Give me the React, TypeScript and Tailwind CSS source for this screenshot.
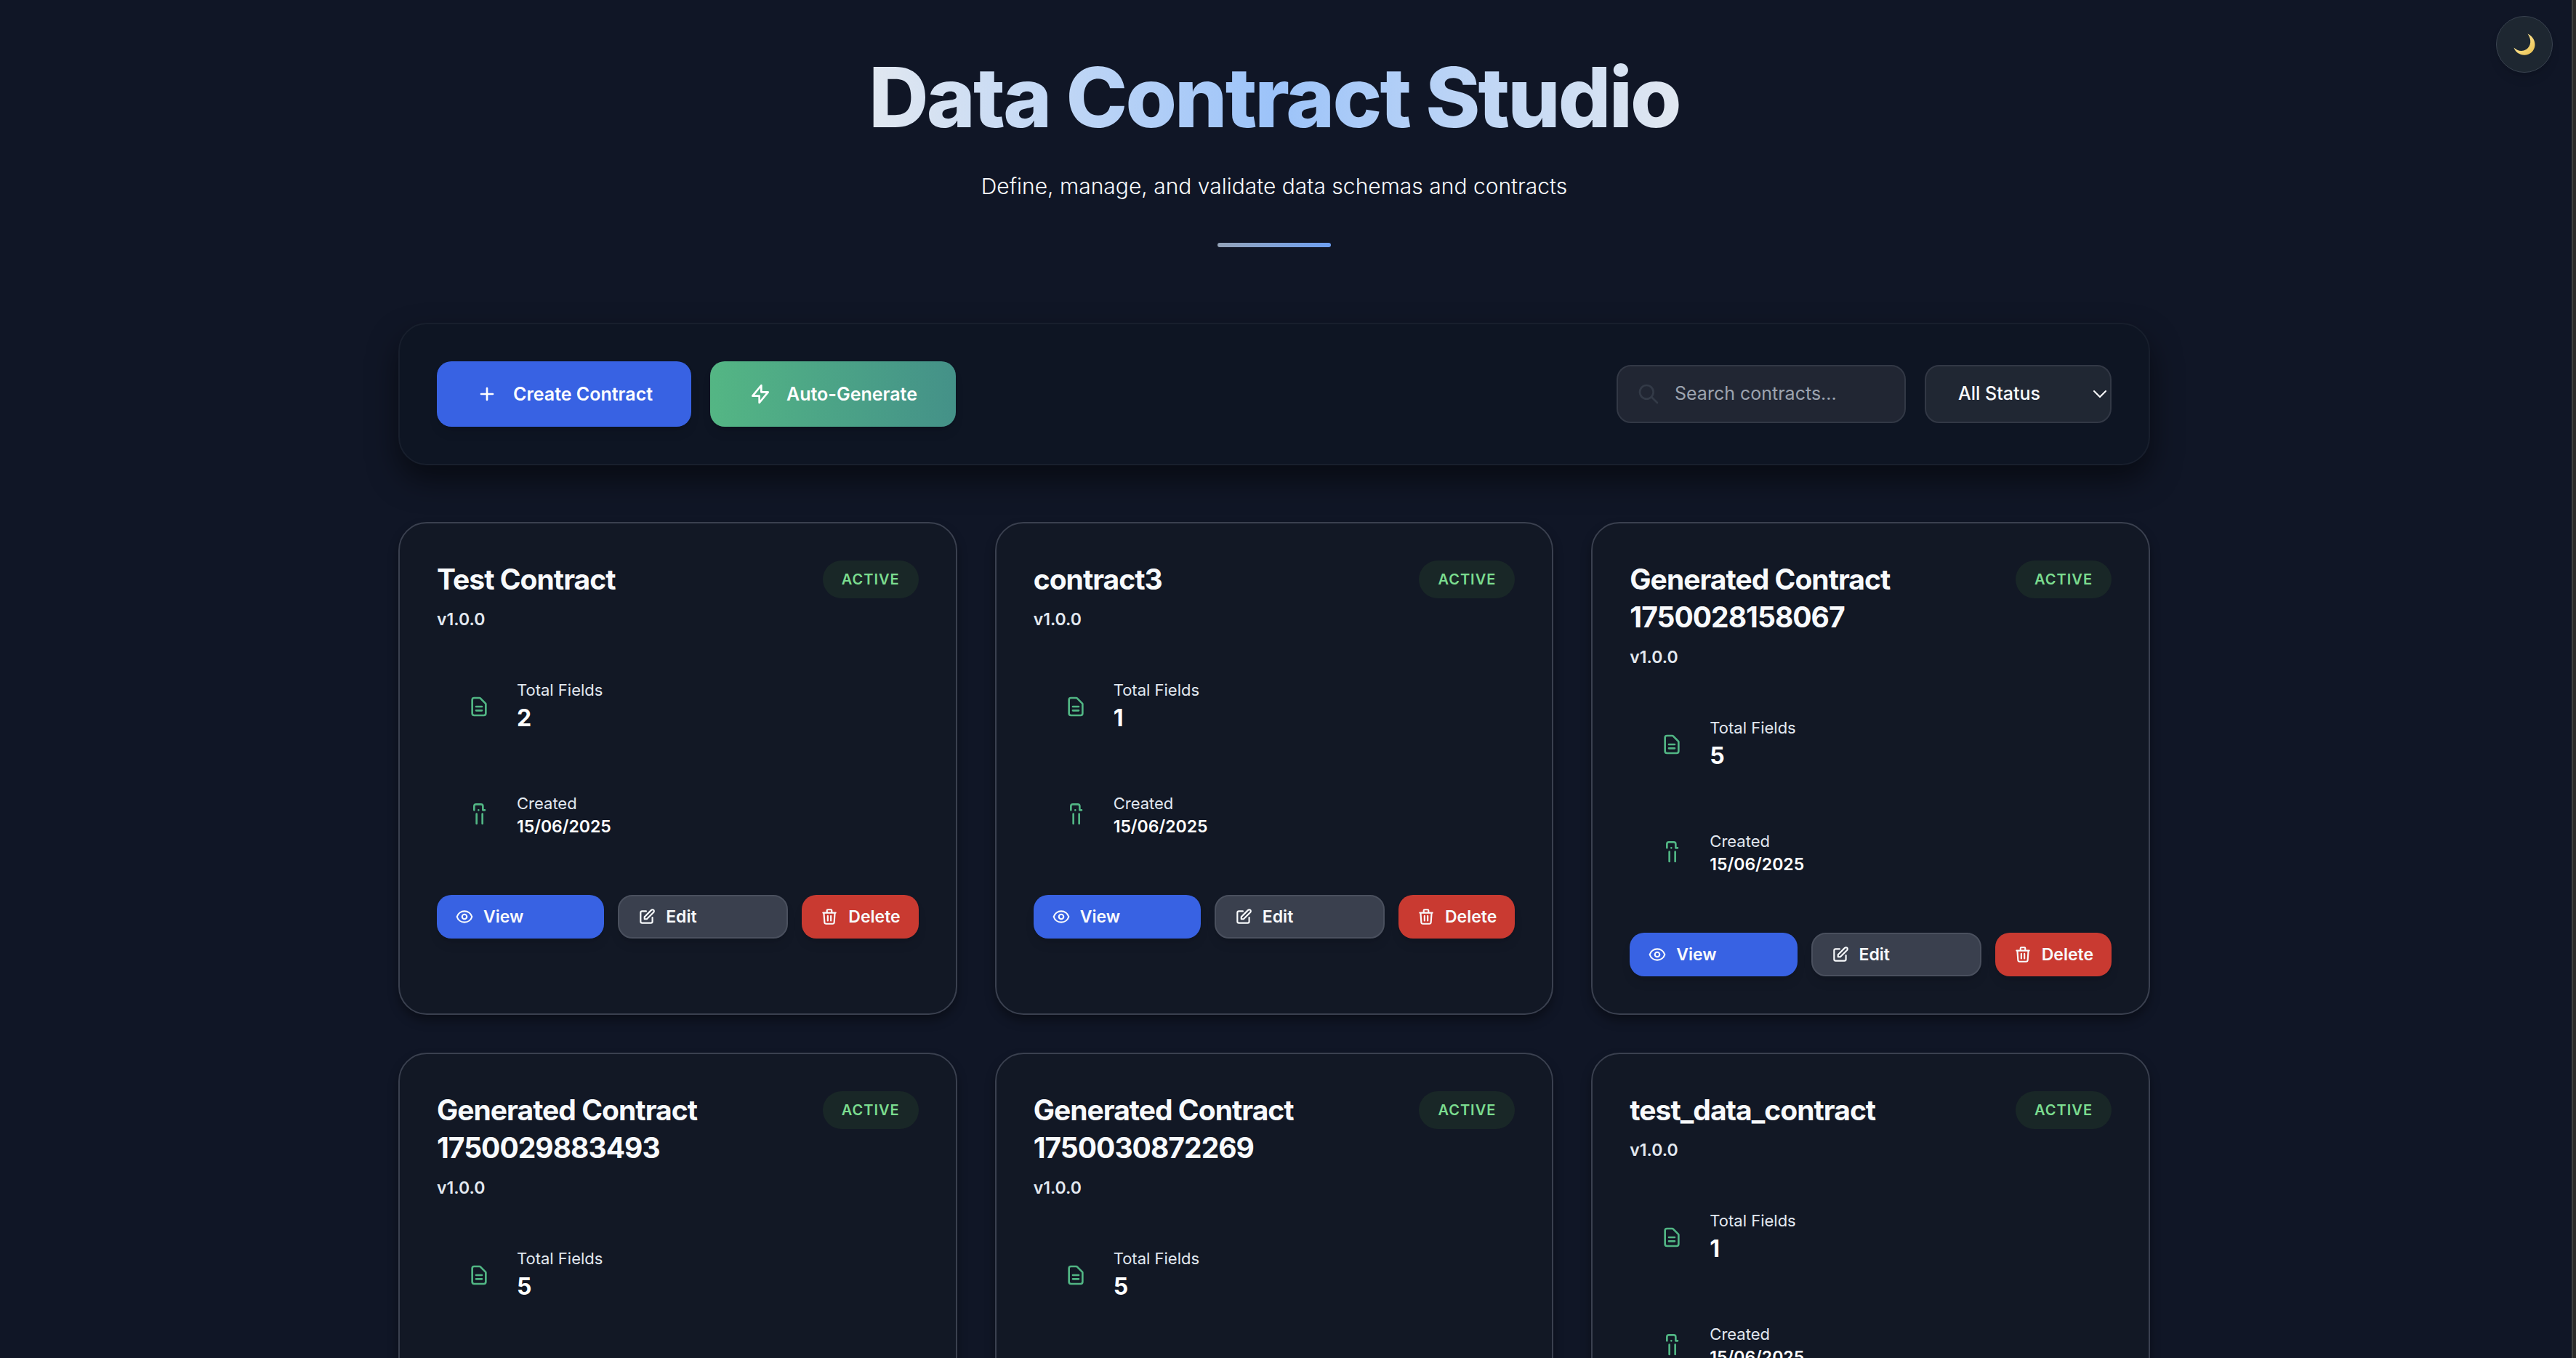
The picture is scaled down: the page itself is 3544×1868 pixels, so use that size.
import React from "react";

type Contract = { name: string; fields: number; created: string };

const contracts: Contract[] = [
  { name: "Test Contract", fields: 2, created: "15/06/2025" },
  { name: "contract3", fields: 1, created: "15/06/2025" },
  { name: "Generated Contract 1750028158067", fields: 5, created: "15/06/2025" },
  { name: "Generated Contract 1750029883493", fields: 5, created: "15/06/2025" },
  { name: "Generated Contract 1750030872269", fields: 5, created: "15/06/2025" },
  { name: "test_data_contract", fields: 1, created: "15/06/2025" },
];

function Icon({ d, className }: { d: string; className: string }) {
  return (
    <svg
      aria-hidden="true"
      viewBox="0 0 24 24"
      fill="none"
      stroke="currentColor"
      strokeWidth={2}
      strokeLinecap="round"
      strokeLinejoin="round"
      className={className}
    >
      <path d={d} />
    </svg>
  );
}

const icons = {
  plus: "M12 6v12m6-6H6",
  bolt: "M13 10V3L4 14h7v7l9-11h-7z",
  search: "M21 21l-6-6m2-5a7 7 0 11-14 0 7 7 0 0114 0z",
  document:
    "M9 12h6m-6 4h6m2 5H7a2 2 0 01-2-2V5a2 2 0 012-2h5.586a1 1 0 01.707.293l5.414 5.414a1 1 0 01.293.707V19a2 2 0 01-2 2z",
  created: "M7 7V3a2 2 0 012-2h5a2 2 0 012 2v4h2M11.500 7h.01M9.500 11v10M15.500 11v10",
  eye: "M15 12a3 3 0 11-6 0 3 3 0 016 0zM2.458 12C3.732 7.943 7.523 5 12 5c4.478 0 8.268 2.943 9.542 7-1.274 4.057-5.064 7-9.542 7-4.477 0-8.268-2.943-9.542-7z",
  edit: "M11 5H6a2 2 0 00-2 2v11a2 2 0 002 2h11a2 2 0 002-2v-5m-1.414-9.414a2 2 0 112.828 2.828L11.828 15H9v-2.828l8.586-8.586z",
  trash:
    "M19 7l-.867 12.142A2 2 0 0116.138 21H7.862a2 2 0 01-1.995-1.858L5 7m5 4v6m4-6v6m1-10V4a1 1 0 00-1-1h-4a1 1 0 00-1 1v3M4 7h16",
};

function Stat({ icon, label, children }: { icon: string; label: string; children: React.ReactNode }) {
  return (
    <div className="flex items-center gap-5 p-[26px]">
      <div className="p-4 text-[#51b584]">
        <Icon d={icon} className="size-8 overflow-visible" />
      </div>
      <div>
        <p className="text-[22px] leading-8 text-slate-200">{label}</p>
        {children}
      </div>
    </div>
  );
}

function ContractCard({ contract }: { contract: Contract }) {
  return (
    <article className="rounded-[39px] border-2 border-[#3a404f] bg-[#121825] p-[51px] shadow-[0_8px_14px_rgba(0,0,0,0.35)]">
      <header className="flex items-start justify-between gap-6">
        <div>
          <h2 className="text-[39px] leading-[52px] font-bold tracking-tight text-slate-50">{contract.name}</h2>
          <p className="mt-[13px] text-[23px] leading-8 font-semibold text-slate-200">v1.0.0</p>
        </div>
        <span className="rounded-full bg-[#192727] px-[26px] py-[13px] text-[20px] leading-[26px] font-semibold tracking-wider text-[#7bdc8f]">
          ACTIVE
        </span>
      </header>
      <div className="mt-[39px] flex flex-col gap-[26px]">
        <Stat icon={icons.document} label="Total Fields">
          <p className="text-[32px] leading-[46px] font-bold text-white">{contract.fields}</p>
        </Stat>
        <Stat icon={icons.created} label="Created">
          <p className="text-[23px] leading-8 font-semibold text-white">{contract.created}</p>
        </Stat>
      </div>
      <div className="mt-[52px] flex gap-[19px] text-[23px] leading-8 font-semibold text-slate-50">
        <button className="flex flex-1 items-center gap-[13px] rounded-[20px] bg-[#3862e3] px-[25px] py-[14px] shadow-lg">
          <Icon d={icons.eye} className="size-[26px]" />
          View
        </button>
        <button className="flex flex-1 items-center gap-[13px] rounded-[20px] border-2 border-[#4a505e] bg-[#3a404e] px-[25px] py-3 shadow-lg">
          <Icon d={icons.edit} className="size-[26px]" />
          Edit
        </button>
        <button className="flex items-center gap-[13px] rounded-[20px] bg-[#c93a31] px-[25px] py-[14px] shadow-lg">
          <Icon d={icons.trash} className="size-[26px]" />
          Delete
        </button>
      </div>
    </article>
  );
}

export default function App() {
  return (
    <div className="flex h-screen overflow-hidden bg-[#101626] font-['Inter',sans-serif]">
      <div className="relative min-w-0 flex-1 overflow-hidden pr-8">
        <button
          aria-label="Toggle dark mode"
          className="absolute top-[22px] right-[26px] flex size-[78px] items-center justify-center rounded-full border border-[#3a4350] bg-[#1e2731] shadow-lg"
        >
          <svg aria-hidden="true" viewBox="0 0 30 30" className="size-[30px]">
            <defs>
              <linearGradient id="moon" x1="0" y1="0" x2="1" y2="1">
                <stop offset="0.4" stopColor="#fbe08a" />
                <stop offset="1" stopColor="#e8bd48" />
              </linearGradient>
            </defs>
            <path d="M19.500 0.500C26 3.500 29.800 9.500 29.500 16 29 24 22.500 29.800 15 29.800 8.500 29.800 2.500 25.500 0.500 19.500 5 24 12 25.500 17.500 22 24 18 25.500 8.500 19.500 0.500z" fill="url(#moon)" />
          </svg>
        </button>

        <main className="mx-auto max-w-[2410px]">
          <header className="flex flex-col items-center pt-[69px] text-center">
            <h1 className="bg-gradient-to-r from-[#e2e8f0] via-[#9cc3f9] to-[#e2e8f0] bg-clip-text px-2 text-[114px] leading-[130px] font-extrabold tracking-tight text-transparent">
              Data Contract Studio
            </h1>
            <p className="mt-[34px] text-[30px] leading-[46px] font-light text-slate-50">
              Define, manage, and validate data schemas and contracts
            </p>
            <div className="mt-[55px] h-[6px] w-[156px] rounded-full bg-gradient-to-r from-[#94a3b8] to-[#6d9ff2]" />
          </header>

          <section className="mt-[104px] flex items-center justify-between rounded-[39px] border-2 border-[#181f2d] bg-[#0e1523] p-[51px] shadow-[0_20px_40px_rgba(0,0,0,0.5)]">
            <div className="flex gap-[26px] text-[25px] leading-[38px] font-semibold text-white">
              <button className="flex items-center gap-5 rounded-[20px] bg-[#3862e3] px-[53px] py-[26px] shadow-lg">
                <Icon d={icons.plus} className="size-8" />
                Create Contract
              </button>
              <button className="flex items-center gap-5 rounded-[20px] bg-gradient-to-r from-[#54b684] to-[#449188] px-[53px] py-[26px] shadow-lg">
                <Icon d={icons.bolt} className="size-8" />
                Auto-Generate
              </button>
            </div>
            <div className="flex gap-[26px] text-[25px]">
              <label className="flex h-20 w-[398px] items-center gap-5 rounded-[20px] border-2 border-[#323845] bg-[#212633] px-[26px]">
                <Icon d={icons.search} className="size-8 shrink-0 text-[#333a47]" />
                <input
                  aria-label="Search contracts"
                  placeholder="Search contracts..."
                  className="w-full min-w-0 bg-transparent text-slate-50 outline-none placeholder:text-[#9ca3af]"
                />
              </label>
              <div className="relative">
                <select
                  aria-label="Filter by status"
                  className="h-20 w-[257px] appearance-none rounded-[20px] border-2 border-[#323845] bg-[#202733] pl-[44px] font-medium text-slate-50"
                >
                  <option>All Status</option>
                  <option>Active</option>
                </select>
                <svg aria-hidden="true" viewBox="0 0 18 10" fill="none" className="pointer-events-none absolute top-[35px] right-[7px] w-[18px]">
                  <path d="M1 1l8 8 8-8" stroke="white" strokeWidth="2" strokeLinecap="round" strokeLinejoin="round" />
                </svg>
              </div>
            </div>
          </section>

          <section className="mt-[78px] grid grid-cols-3 gap-[52px]">
            {contracts.map((c) => (
              <ContractCard key={c.name} contract={c} />
            ))}
          </section>
        </main>
      </div>
      <div className="w-[6px] border-l-2 border-[#3f413f] bg-[#2c2c2b]" />
    </div>
  );
}
